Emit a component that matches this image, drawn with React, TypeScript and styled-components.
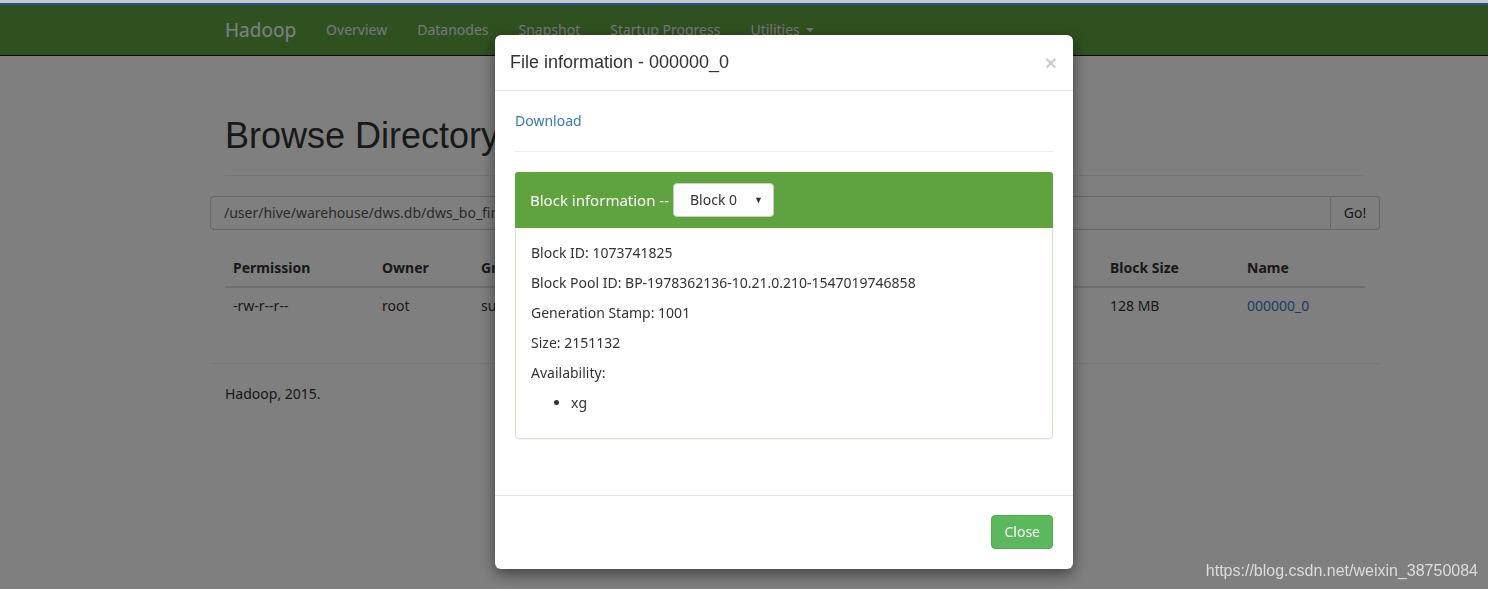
import React from "react";
import styled, { createGlobalStyle } from "styled-components";

const BODY_FONT = '"Noto Sans", "Open Sans", sans-serif';
const HEAD_FONT = '"Liberation Sans", Arial, sans-serif';

const GlobalStyle = createGlobalStyle`
  html, body { margin: 0; padding: 0; }
  body {
    background: #fff;
    color: #333;
    font-family: ${BODY_FONT};
    font-size: 14px;
    line-height: 20px;
    width: 1488px;
    height: 589px;
    overflow: hidden;
  }
  * { box-sizing: border-box; }
`;

const Page = styled.div`
  padding-top: 5px;
`;

const Navbar = styled.nav`
  height: 51px;
  background: #5fa23e;
  border-bottom: 1px solid #0a1405;
`;

const NavInner = styled.div`
  width: 1170px;
  margin-left: 210px;
  padding: 0 15px;
  display: flex;
  align-items: center;
  height: 50px;
`;

const Brand = styled.span`
  font-size: 19px;
  color: #fff;
  padding-right: 15px;
`;

const NavLink = styled.span`
  font-size: 14px;
  color: #eee;
  padding: 0 15px;
  display: inline-flex;
  align-items: center;
  gap: 6px;
`;

const Caret = styled.span`
  width: 0;
  height: 0;
  border-left: 4px solid transparent;
  border-right: 4px solid transparent;
  border-top: 4px solid #eee;
`;

const Container = styled.div`
  width: 1170px;
  margin-left: 210px;
  padding: 0 15px;
`;

const PageHeader = styled.div`
  display: flow-root;
  margin-top: 40px;
  padding-bottom: 9px;
  border-bottom: 1px solid #eee;
`;

const Title = styled.h1`
  font-family: ${HEAD_FONT};
  font-weight: 500;
  font-size: 36px;
  line-height: 1.1;
  margin: 20px 0 10px;
  color: #333;
`;

const InputGroup = styled.div`
  margin: 20px -15px 0;
  display: flex;
  height: 34px;
`;

const PathInput = styled.div`
  flex: 1;
  border: 1px solid #ccc;
  border-radius: 4px 0 0 4px;
  padding: 6px 13px;
  font-size: 14px;
  color: #555;
  white-space: nowrap;
  overflow: hidden;
`;

const GoButton = styled.div`
  width: 49px;
  border: 1px solid #ccc;
  border-left: none;
  border-radius: 0 4px 4px 0;
  background: #fff;
  display: flex;
  align-items: center;
  justify-content: center;
  color: #333;
`;

const Table = styled.table`
  width: 1140px;
  margin-top: 20px;
  margin-bottom: 39px;
  border-collapse: collapse;
  table-layout: fixed;
`;

const Th = styled.th<{ $w: number }>`
  width: ${(p) => p.$w}px;
  text-align: left;
  padding: 8px;
  font-weight: bold;
  border-bottom: 2px solid #ddd;
  white-space: nowrap;
  overflow: hidden;
`;

const Td = styled.td`
  padding: 8px;
  border-top: 1px solid #ddd;
  white-space: nowrap;
  overflow: hidden;
`;

const TableLink = styled.a`
  color: #337ab7;
  text-decoration: none;
`;

const FooterRule = styled.hr`
  margin: 0 -15px 20px;
  border: 0;
  border-top: 1px solid #eee;
`;

const FooterText = styled.p`
  margin: 0;
`;

const Overlay = styled.div`
  position: fixed;
  inset: 0;
  background: rgba(0, 0, 0, 0.5);
  display: flex;
  flex-direction: column;
`;

const BrowserStrip = styled.div`
  height: 5px;
  background: linear-gradient(#c6cad6 0, #c6cad6 3px, #2f4d8c 3px, #2f4d8c 5px);
`;

const ModalArea = styled.div`
  padding: 30px 0 0 495px;
`;

const Modal = styled.div`
  width: 578px;
  background: #fff;
  border-radius: 6px;
  box-shadow: 0 5px 15px rgba(0, 0, 0, 0.5);
`;

const ModalHeader = styled.div`
  display: flex;
  align-items: center;
  justify-content: space-between;
  padding: 15px 15px 15px;
  border-bottom: 1px solid #e5e5e5;
`;

const ModalTitle = styled.h4`
  margin: 0;
  font-family: ${HEAD_FONT};
  font-weight: 500;
  font-size: 18px;
  line-height: 25px;
  color: #333;
`;

const CloseX = styled.span`
  font-family: ${HEAD_FONT};
  font-size: 21px;
  font-weight: bold;
  color: #000;
  opacity: 0.2;
  line-height: 1;
  margin-right: 1px;
`;

const ModalBody = styled.div`
  padding: 20px 20px 56px;
`;

const Link = styled.a`
  color: #337ab7;
  text-decoration: none;
`;

const Rule = styled.hr`
  margin: 20px 0;
  border: 0;
  border-top: 1px solid #eee;
`;

const Panel = styled.div`
  border: 1px solid #d6e9c6;
  border-radius: 4px;
  box-shadow: 0 1px 1px rgba(0, 0, 0, 0.05);
`;

const PanelHeading = styled.div`
  background: #5fa33e;
  color: #fff;
  padding: 11px 15px;
  display: flex;
  align-items: center;
  gap: 4px;
  font-size: 15px;
  border-radius: 3px 3px 0 0;
  margin: -1px -1px 0;
`;

const SelectBox = styled.div`
  width: 101px;
  height: 34px;
  background: #fff;
  border: 1px solid #ccc;
  border-radius: 4px;
  color: #333;
  font-size: 14px;
  display: flex;
  align-items: center;
  justify-content: space-between;
  padding: 0 10px 0 16px;
`;

const SelectCaret = styled.span`
  font-size: 9px;
  color: #333;
`;

const PanelBody = styled.div`
  padding: 15px;
`;

const Line = styled.p`
  margin: 0 0 10px;
`;

const List = styled.ul`
  margin: 0 0 10px;
  padding-left: 40px;
`;

const ModalFooter = styled.div`
  padding: 19px 20px 20px;
  border-top: 1px solid #e5e5e5;
  display: flex;
  justify-content: flex-end;
`;

const CloseButton = styled.button`
  font-family: ${BODY_FONT};
  font-size: 14px;
  line-height: 20px;
  padding: 6px 12px;
  color: #fff;
  background: #5cb85c;
  border: 1px solid #4cae4c;
  border-radius: 4px;
`;

const Watermark = styled.div`
  position: absolute;
  right: 10px;
  bottom: 8px;
  font-family: ${HEAD_FONT};
  font-size: 16px;
  color: #dcdcdc;
`;

const columns: [string, number][] = [
  ["Permission", 149],
  ["Owner", 99],
  ["Group", 127],
  ["Size", 100],
  ["Last Modified", 250],
  ["Replication", 152],
  ["Block Size", 137],
  ["Name", 126],
];

const row = ["-rw-r--r--", "root", "supergroup", "2.05 MB", "Thu Jan 10 15:22:45 +0800 2019", "3", "128 MB"];

export default function App() {
  return (
    <>
      <GlobalStyle />
      <Page>
        <Navbar>
          <NavInner>
            <Brand>Hadoop</Brand>
            <NavLink>Overview</NavLink>
            <NavLink>Datanodes</NavLink>
            <NavLink>Snapshot</NavLink>
            <NavLink>Startup Progress</NavLink>
            <NavLink>
              Utilities <Caret />
            </NavLink>
          </NavInner>
        </Navbar>
        <Container>
          <PageHeader>
            <Title>Browse Directory</Title>
          </PageHeader>
          <InputGroup>
            <PathInput>/user/hive/warehouse/dws.db/dws_bo_final_spark_test/dt=2019-01-10</PathInput>
            <GoButton>Go!</GoButton>
          </InputGroup>
          <Table>
            <thead>
              <tr>
                {columns.map(([c, w]) => (
                  <Th key={c} $w={w}>
                    {c}
                  </Th>
                ))}
              </tr>
            </thead>
            <tbody>
              <tr>
                {row.map((v, i) => (
                  <Td key={i}>{v}</Td>
                ))}
                <Td>
                  <TableLink>000000_0</TableLink>
                </Td>
              </tr>
            </tbody>
          </Table>
          <FooterRule />
          <FooterText>Hadoop, 2015.</FooterText>
        </Container>
      </Page>
      <Overlay>
        <BrowserStrip />
        <ModalArea>
          <Modal>
            <ModalHeader>
              <ModalTitle>File information - 000000_0</ModalTitle>
              <CloseX>×</CloseX>
            </ModalHeader>
            <ModalBody>
              <Link>Download</Link>
              <Rule />
              <Panel>
                <PanelHeading>
                  Block information --
                  <SelectBox>
                    Block 0 <SelectCaret>▼</SelectCaret>
                  </SelectBox>
                </PanelHeading>
                <PanelBody>
                  <Line>Block ID: 1073741825</Line>
                  <Line>Block Pool ID: BP-1978362136-10.21.0.210-1547019746858</Line>
                  <Line>Generation Stamp: 1001</Line>
                  <Line>Size: 2151132</Line>
                  <Line>Availability:</Line>
                  <List>
                    <li>xg</li>
                  </List>
                </PanelBody>
              </Panel>
            </ModalBody>
            <ModalFooter>
              <CloseButton>Close</CloseButton>
            </ModalFooter>
          </Modal>
        </ModalArea>
        <Watermark>https://blog.csdn.net/weixin_38750084</Watermark>
      </Overlay>
    </>
  );
}
